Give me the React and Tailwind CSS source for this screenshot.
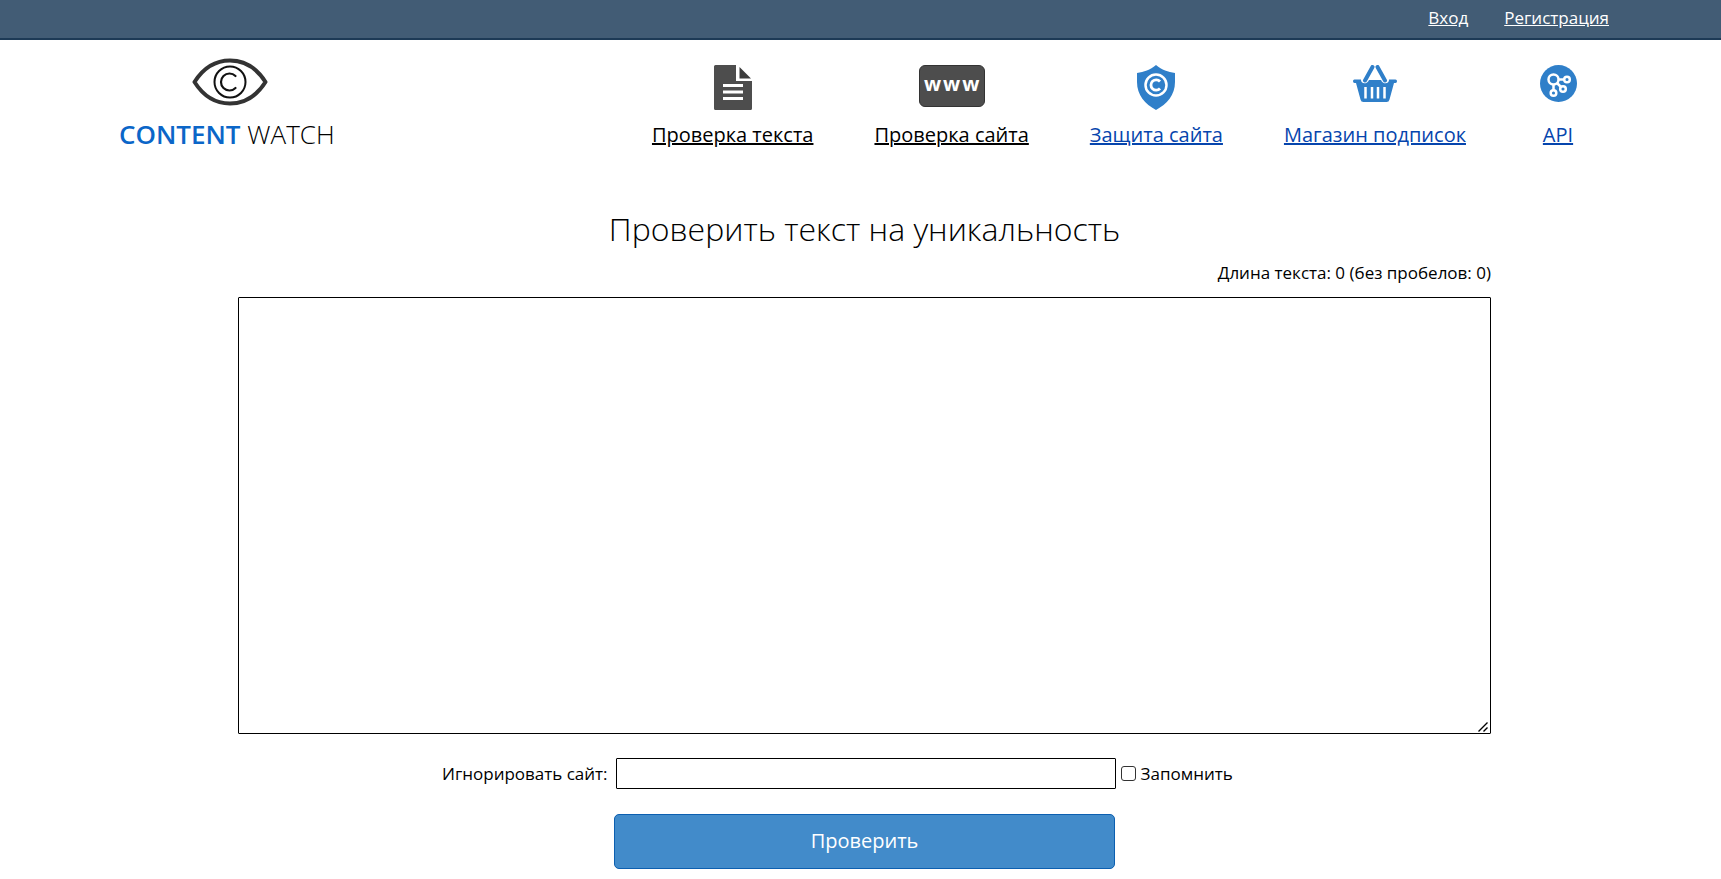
import { useState } from "react";

function EyeLogo() {
  return (
    <svg width="82" height="48" viewBox="-6 0 82 48" fill="none" aria-hidden="true">
      <path
        d="M2.500 24C12 9 24 2.500 38 2.500S64 9 73.500 24C64 39 52 45.500 38 45.500S12 39 2.500 24Z"
        stroke="#333333"
        strokeWidth="4"
        strokeLinejoin="round"
      />
      <circle cx="38" cy="24" r="15.500" stroke="#111111" strokeWidth="2" />
      <path d="M43.500 18A8.500 8.500 0 1 0 43.500 30" stroke="#111111" strokeWidth="2.200" strokeLinecap="round" />
    </svg>
  );
}

function DocumentIcon() {
  return (
    <svg width="38" height="45" viewBox="0 0 38 45" aria-hidden="true">
      <path d="M1.500 0H22V16H38V43.500Q38 45 36.500 45H1.500Q0 45 0 43.500V1.500Q0 0 1.500 0Z" fill="#4d4d4d" />
      <path d="M25.500 2V13.500H37Z" fill="#3c3c3c" />
      <path d="M9 20.500H29M9 27H29M9 33.500H29" stroke="#ffffff" strokeWidth="3" />
    </svg>
  );
}

function WwwIcon() {
  return (
    <span
      aria-hidden="true"
      className="flex h-[42px] w-[66px] items-center justify-center rounded-md border border-[#333333] bg-[#4d4d4d] pb-1 pl-[2px] text-[20px] leading-none font-bold tracking-widest text-white"
    >
      www
    </span>
  );
}

function ShieldIcon() {
  return (
    <svg width="38" height="45" viewBox="0 0 38 45" fill="none" aria-hidden="true">
      <path d="M19 0C13 5 7 7 0 8V17C0 30 8 39 19 45C30 39 38 30 38 17V8C31 7 25 5 19 0Z" fill="#2f7fc9" />
      <circle cx="19" cy="20" r="10.500" stroke="#ffffff" strokeWidth="2.500" />
      <path d="M23 16.500A5.200 5.200 0 1 0 23 23.500" stroke="#ffffff" strokeWidth="2.800" />
    </svg>
  );
}

function BasketIcon() {
  return (
    <svg width="44" height="37" viewBox="0 0 44 37" fill="none" aria-hidden="true">
      <path
        d="M1.500 14.500H8C7.500 19 14 20 16 15H28C30 20 36.500 19 36 14.500H42.500Q44 14.500 44 16.200T42.500 18H41L36.500 34.500Q36 37 33.500 37H10.500Q8 37 7.500 34.500L3 18H1.500Q0 18 0 16.200T1.500 14.500Z"
        fill="#2f7fc9"
      />
      <path d="M19.500 2L12 15.500M24.500 2L32 15.500" stroke="#2f7fc9" strokeWidth="4" strokeLinecap="round" />
      <path d="M12.500 22V33.500M19 22V33.500M25 22V33.500M31.500 22V33.500" stroke="#ffffff" strokeWidth="2.500" />
    </svg>
  );
}

function ApiIcon() {
  return (
    <svg width="37" height="37" viewBox="0 0 37 37" fill="none" aria-hidden="true">
      <circle cx="18.500" cy="18.500" r="18.500" fill="#2f7fc9" />
      <g stroke="#ffffff" strokeWidth="2.500">
        <circle cx="13.500" cy="14.500" r="5" />
        <circle cx="27" cy="14.500" r="2.800" />
        <circle cx="23" cy="24" r="2.800" />
        <circle cx="13.500" cy="28" r="2.800" />
        <path d="M18.500 14.500H24.500M17 18L21 22M13.500 19.500V25.500" />
      </g>
    </svg>
  );
}

const NAV = [
  { label: "Проверка текста", icon: DocumentIcon, color: "text-black" },
  { label: "Проверка сайта", icon: WwwIcon, color: "text-black" },
  { label: "Защита сайта", icon: ShieldIcon, color: "text-[#0645ad]" },
  { label: "Магазин подписок", icon: BasketIcon, color: "text-[#0645ad]" },
  { label: "API", icon: ApiIcon, color: "text-[#0645ad]" },
];

export default function App() {
  const [text, setText] = useState("");
  const [ignore, setIgnore] = useState("");
  const [remember, setRemember] = useState(false);

  return (
    <div className="bg-white font-['Open_Sans','Noto_Sans',sans-serif] text-black">
      {/* Top bar */}
      <div className="flex h-10 justify-end gap-9 border-b-2 border-[#1d3a56] bg-[#425c75] pt-1 pr-28 text-[17px] leading-7 text-white">
        <a href="#login" className="underline">Вход</a>
        <a href="#register" className="underline">Регистрация</a>
      </div>

      {/* Header */}
      <header className="flex items-start justify-between pr-33 pl-[119px]">
        <a href="#home" className="flex flex-col items-center pt-[18px]">
          <EyeLogo />
          <span className="mt-3 text-[26px] leading-8 font-light whitespace-nowrap">
            <span className="font-semibold text-[#0b66c8]">CONTENT</span> WATCH
          </span>
        </a>
        <nav className="flex gap-[61px] pt-[25px]">
          {NAV.map(({ label, icon: Icon, color }) => (
            <a key={label} href="#nav" className={`flex min-w-[62px] flex-col items-center ${color}`}>
              <span className="h-[54px]">
                <Icon />
              </span>
              <span className="text-[20px] leading-8 whitespace-nowrap underline">{label}</span>
            </a>
          ))}
        </nav>
      </header>

      {/* Check form */}
      <main className="mt-14 pr-[230px] pl-[238px]">
        <h1 className="text-center text-[32px] leading-11 font-light">Проверить текст на уникальность</h1>
        <form onSubmit={(e) => e.preventDefault()}>
          <p className="mt-2 text-right text-[17px] leading-7">
            Длина текста: {text.length} (без пробелов: {text.replace(/\s/g, "").length})
          </p>
          <div className="relative mt-[10px]">
            <textarea
              aria-label="Текст для проверки"
              value={text}
              onChange={(e) => setText(e.target.value)}
              className="block h-[437px] w-full resize-none rounded-[1px] border border-black p-2 text-[17px]"
            />
            <svg
              width="10"
              height="10"
              viewBox="0 0 10 10"
              className="pointer-events-none absolute right-[3px] bottom-[2px]"
              aria-hidden="true"
            >
              <path d="M0.500 9.500L9.500 0.500M5.500 9.500L9.500 5.500" stroke="#000000" strokeWidth="1.400" />
            </svg>
          </div>
          <div className="mt-6 flex items-center pl-[204px] text-[17px]">
            <label htmlFor="ignore">Игнорировать сайт:</label>
            <input
              id="ignore"
              type="text"
              value={ignore}
              onChange={(e) => setIgnore(e.target.value)}
              className="ml-2 h-[31px] w-[500px] rounded-[1px] border border-black px-2"
            />
            <input
              id="remember"
              type="checkbox"
              checked={remember}
              onChange={(e) => setRemember(e.target.checked)}
              className="ml-[5px] size-[15px] appearance-none rounded-[3px] border border-[#333333] bg-white checked:bg-[#0b66c8]"
            />
            <label htmlFor="remember" className="ml-[5px]">Запомнить</label>
          </div>
          <button
            type="submit"
            className="mx-auto mt-[25px] block h-[55px] w-[40%] rounded-[5px] border border-[#0c5fb0] bg-[#428bca] pb-[2px] text-[20px] text-white"
          >
            Проверить
          </button>
        </form>
      </main>
    </div>
  );
}
